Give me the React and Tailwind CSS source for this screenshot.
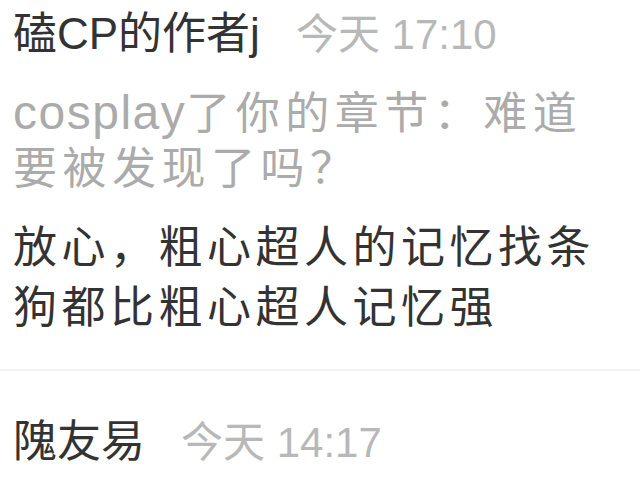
import React from 'react';

const comments = [
  {
    id: 1,
    author: '磕CP的作者j',
    time: '今天 17:10',
    quoteLatin: 'cosplay',
    quote: '了你的章节：难道要被发现了吗？',
    body: '放心，粗心超人的记忆找条狗都比粗心超人记忆强',
  },
  {
    id: 2,
    author: '隗友易',
    time: '今天 14:17',
  },
];

function CommentHeader({ author, time }) {
  return (
    <div className="flex items-baseline whitespace-nowrap">
      <span className="text-[44px] leading-[44px] text-[#333333]">{author}</span>
      <span className="ml-[36px] text-[42px] leading-[44px] text-[#b8b8b8]">{time}</span>
    </div>
  );
}

export default function App() {
  const [first, second] = comments;

  return (
    <div className="w-[640px] h-[483px] overflow-hidden bg-white font-['Liberation_Sans','Noto_Sans_CJK_SC',sans-serif]">
      {/* ── first comment ─────────────────────────── */}
      <div className="px-[13px] pt-[12px] pb-[31px]">
        <CommentHeader author={first.author} time={first.time} />
        <p className="mt-[28px] max-w-[610px] text-[44px] leading-[55px] tracking-[5.5px] text-[#ababab]">
          <span className="text-[48px] tracking-[1.5px]">{first.quoteLatin}</span>
          {first.quote}
        </p>
        <p className="mt-[22px] text-[44px] leading-[60px] tracking-[4.5px] text-[#333333]">
          {first.body}
        </p>
      </div>

      <div className="h-[2px] bg-[#f2f2f2]" />

      {/* ── second comment ────────────────────────── */}
      <div className="px-[13px] pt-[49px]">
        <CommentHeader author={second.author} time={second.time} />
      </div>
    </div>
  );
}
